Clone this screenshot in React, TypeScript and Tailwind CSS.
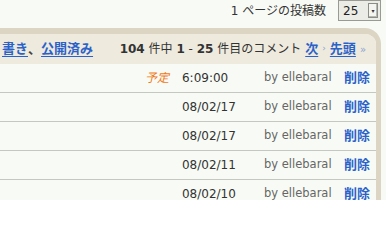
const rows = [
  { tag: "予定", date: "6:09:00" },
  { tag: "", date: "08/02/17" },
  { tag: "", date: "08/02/17" },
  { tag: "", date: "08/02/11" },
  { tag: "", date: "08/02/10" },
];

const font = "font-['DejaVu_Sans','Noto_Sans_CJK_JP',sans-serif]";

export default function App() {
  return (
    <div className={`h-[200px] w-[386px] overflow-hidden bg-[#f8fbf5] text-[#333] ${font}`}>
      {/* Per-page selector */}
      <div className="flex h-[21px] items-center justify-end gap-[12px] pr-[5px]">
        <span className="text-[12px] leading-none">1 ページの投稿数</span>
        <div className="flex h-[21px] w-[43px] items-center justify-between border border-[#9a9a94] bg-[#ecece6] pl-[4px] pr-[2px]">
          <span className="text-[12px] leading-none text-[#222]">25</span>
          <span className="flex h-[15px] w-[10px] items-center justify-center border border-[#8d8d88] bg-[#f4f4f0] text-[6px] leading-none text-[#333] shadow-[inset_-1px_-1px_0_#b8b8b2]">
            ▾
          </span>
        </div>
      </div>

      {/* Comment panel */}
      <div className="mt-[7px] mr-[5px] overflow-hidden rounded-tr-[16px] border-t-[6px] border-r-[5px] border-[#ddd5c3]">
        <div className="flex h-[30px] items-center bg-[#eeeade] pr-[10px] pl-[2px]">
          <div className="flex items-center text-[13px] font-bold">
            <a className="text-[#2a62c9] underline decoration-[1px] underline-offset-[3px]">書き</a>
            <span className="text-[#444]">、</span>
            <a className="text-[#2a62c9] underline decoration-[1px] underline-offset-[3px]">公開済み</a>
          </div>
          <div className="ml-auto flex items-center gap-[4px] text-[12px] text-[#333]">
            <span>
              <b>104</b> 件中 <b>1</b> - <b>25</b> 件目のコメント
            </span>
            <a className="text-[13px] font-bold text-[#2a62c9] underline decoration-[1px] underline-offset-[3px]">次</a>
            <span className="text-[9px] text-[#8aa3d6]">›</span>
            <a className="text-[13px] font-bold text-[#2a62c9] underline decoration-[1px] underline-offset-[3px]">先頭</a>
            <span className="text-[10px] text-[#8aa3d6]">»</span>
          </div>
        </div>

        {rows.map((r, i) => (
          <div
            key={i}
            className="flex h-[29px] items-center justify-end border-b border-[#c4c8c0] pr-[6px] text-[12px]"
          >
            {r.tag && <span className="mr-[13px] italic text-[#f07818]">{r.tag}</span>}
            <span className="w-[82px] text-[#333]">{r.date}</span>
            <span className="w-[80px] text-[11.5px] text-[#666]">by ellebaral</span>
            <a className="text-[13px] font-bold text-[#2a62c9]">削除</a>
          </div>
        ))}
      </div>
    </div>
  );
}
